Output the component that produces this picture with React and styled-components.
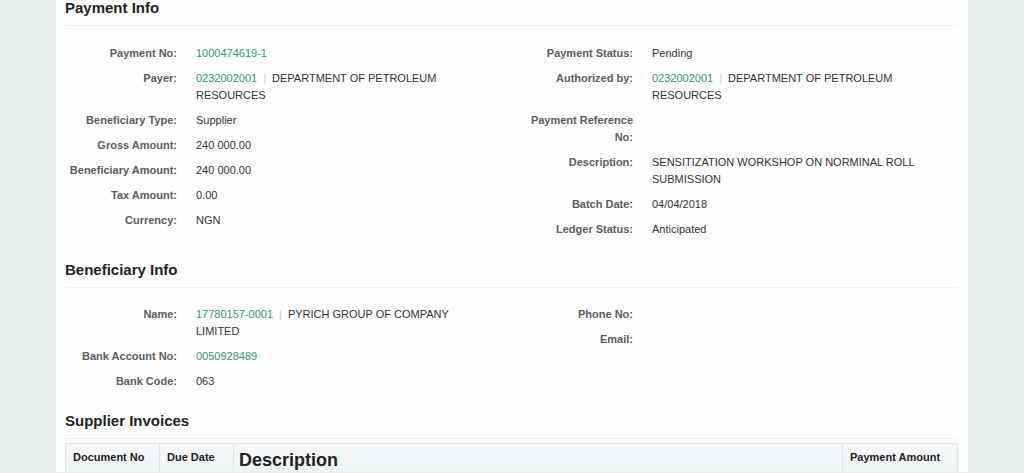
import React from "react";
import styled, { createGlobalStyle } from "styled-components";

const GlobalStyle = createGlobalStyle`
  html, body {
    margin: 0;
    padding: 0;
    background: #e8eeec;
    font-family: "Liberation Sans", Arial, sans-serif;
    overflow: hidden;
  }
`;

const Page = styled.div`
  padding-left: 56px;
  height: 473px;
`;

const Card = styled.div`
  width: 893px;
  min-height: 473px;
  background: #fdfdfd;
  padding: 0 10px 0 9px;
`;

const Section = styled.section`
  margin-top: ${(p) => (p.$gap !== undefined ? p.$gap : 23)}px;
`;

const Heading = styled.h2`
  margin: 0;
  font-size: 15px;
  line-height: 17px;
  font-weight: bold;
  color: #222;
  padding-bottom: 9px;
  border-bottom: 1px solid #f0f0f0;
`;

const Columns = styled.div`
  display: grid;
  grid-template-columns: 456px 1fr;
  padding-top: ${(p) => p.$top || 18}px;
  align-items: start;
`;

const Fields = styled.div`
  display: grid;
  grid-template-columns: 112px 290px;
  column-gap: 19px;
  row-gap: 8px;
  font-size: 11px;
  line-height: 17px;
`;

const Label = styled.div`
  text-align: right;
  font-weight: bold;
  color: #5c5c5c;
`;

const Value = styled.div`
  color: #333;
`;

const Link = styled.span`
  color: #2e9b70;
`;

const Sep = styled.span`
  color: #d0d0d0;
  margin: 0 6px;
`;

const Table = styled.table`
  width: 893px;
  margin-top: 4px;
  border-collapse: collapse;
  font-size: 11px;
`;

const Th = styled.th`
  text-align: left;
  vertical-align: top;
  padding: ${(p) => (p.$big ? "4px 5px" : "5px 7px")};
  width: ${(p) => p.$w || "auto"};
  font-size: ${(p) => (p.$big ? "18px" : "11px")};
  line-height: ${(p) => (p.$big ? "24px" : "17px")};
  font-weight: bold;
  color: #222;
  height: 40px;
  background: linear-gradient(#f7f9fa, #e9eef1);
  border: 1px solid #dde3e6;
`;

const Field = ({ label, children }) => (
  <>
    <Label>{label}</Label>
    <Value>{children}</Value>
  </>
);

export default function App() {
  return (
    <>
      <GlobalStyle />
      <Page>
        <Card>
          <Section $gap={-1}>
            <Heading>Payment Info</Heading>
            <Columns $top={19}>
              <Fields>
                <Field label="Payment No:">
                  <Link>1000474619-1</Link>
                </Field>
                <Field label="Payer:">
                  <Link>0232002001</Link>
                  <Sep>|</Sep>DEPARTMENT OF PETROLEUM RESOURCES
                </Field>
                <Field label="Beneficiary Type:">Supplier</Field>
                <Field label="Gross Amount:">240 000.00</Field>
                <Field label="Beneficiary Amount:">240 000.00</Field>
                <Field label="Tax Amount:">0.00</Field>
                <Field label="Currency:">NGN</Field>
              </Fields>
              <Fields>
                <Field label="Payment Status:">Pending</Field>
                <Field label="Authorized by:">
                  <Link>0232002001</Link>
                  <Sep>|</Sep>DEPARTMENT OF PETROLEUM RESOURCES
                </Field>
                <Field label="Payment Reference No:" />
                <Field label="Description:">
                  SENSITIZATION WORKSHOP ON NORMINAL ROLL SUBMISSION
                </Field>
                <Field label="Batch Date:">04/04/2018</Field>
                <Field label="Ledger Status:">Anticipated</Field>
              </Fields>
            </Columns>
          </Section>

          <Section>
            <Heading>Beneficiary Info</Heading>
            <Columns $top={18}>
              <Fields>
                <Field label="Name:">
                  <Link>17780157-0001</Link>
                  <Sep>|</Sep>PYRICH GROUP OF COMPANY LIMITED
                </Field>
                <Field label="Bank Account No:">
                  <Link>0050928489</Link>
                </Field>
                <Field label="Bank Code:">063</Field>
              </Fields>
              <Fields>
                <Field label="Phone No:" />
                <Field label="Email:" />
              </Fields>
            </Columns>
          </Section>

          <Section $gap={22}>
            <Heading>Supplier Invoices</Heading>
            <Table>
              <thead>
                <tr>
                  <Th $w="79px">Document No</Th>
                  <Th $w="59px">Due Date</Th>
                  <Th $big>Description</Th>
                  <Th $w="100px">Payment Amount</Th>
                </tr>
              </thead>
            </Table>
          </Section>
        </Card>
      </Page>
    </>
  );
}
